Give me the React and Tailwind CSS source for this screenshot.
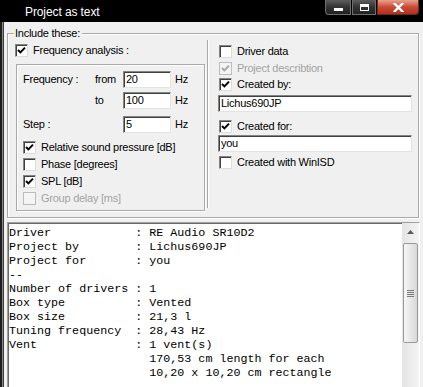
import React from "react";

const report = [
  "Driver            : RE Audio SR10D2",
  "Project by        : Lichus690JP",
  "Project for       : you",
  "--",
  "Number of drivers : 1",
  "Box type          : Vented",
  "Box size          : 21,3 l",
  "Tuning frequency  : 28,43 Hz",
  "Vent              : 1 vent(s)",
  "                    170,53 cm length for each",
  "                    10,20 x 10,20 cm rectangle",
].join("\n");

function Tick({ color }) {
  return (
    <svg width="9" height="9" viewBox="0 0 9 9">
      <polyline points="1,4 3.4,6.4 8,1.6" fill="none" stroke={color} strokeWidth="2" />
    </svg>
  );
}

function Check({ checked, disabled, label }) {
  return (
    <div className="flex h-[13px] items-center gap-[5px]">
      {disabled ? (
        <span className="flex h-[13px] w-[13px] shrink-0 items-center justify-center border border-[#bcbcbc] bg-[#f4f4f4]">
          {checked ? <Tick color="#a6a6a6" /> : null}
        </span>
      ) : (
        <span className="flex h-[13px] w-[13px] shrink-0 items-center justify-center border border-t-[#858585] border-l-[#858585] border-b-[#dcdcdc] border-r-[#dcdcdc] bg-white shadow-[inset_1px_1px_0_#404040]">
          {checked ? <Tick color="#000" /> : null}
        </span>
      )}
      <span className={disabled ? "text-[#a3a3a3]" : "text-black"}>{label}</span>
    </div>
  );
}

function Field({ value, className }) {
  return (
    <div
      className={`h-[17px] border border-t-[#858585] border-l-[#858585] border-b-[#e3e3e3] border-r-[#e3e3e3] bg-white pl-[2px] text-[11px] leading-[15px] shadow-[inset_1px_1px_0_#404040] ${className}`}
    >
      {value}
    </div>
  );
}

function Scrollbar() {
  return (
    <div className="flex w-[17px] flex-col bg-gradient-to-r from-[#e4e4e4] to-[#f4f4f4]">
      <div className="flex h-[17px] items-center justify-center">
        <svg width="7" height="4" viewBox="0 0 7 4">
          <polygon points="0,4 3.5,0 7,4" fill="#5a5a5a" />
        </svg>
      </div>
      <div className="mx-[1px] mt-[3px] flex h-[100px] flex-col items-center justify-center gap-[1px] rounded-[2px] border border-[#9a9a9a] bg-gradient-to-r from-[#f6f6f6] via-[#e8e8e8] to-[#d8d8d8]">
        <span className="h-[1px] w-[7px] bg-[#7a7a7a]" />
        <span className="h-[1px] w-[7px] bg-[#7a7a7a]" />
        <span className="h-[1px] w-[7px] bg-[#7a7a7a]" />
        <span className="h-[1px] w-[7px] bg-[#7a7a7a]" />
      </div>
    </div>
  );
}

export default function App() {
  return (
    <div className="flex h-[387px] w-[423px] flex-col overflow-hidden bg-black font-['Liberation_Sans',Arial,sans-serif] text-[11px] tracking-[-0.25px] text-black">
      {/* title bar */}
      <div className="flex h-[22px] shrink-0 items-start justify-between bg-black">
        <div className="pl-[25px] pt-[5px] text-[12px] leading-[14px] tracking-[-0.1px] text-white">Project as text</div>
        <div className="flex gap-[1px] pr-[4px]">
          <div className="flex h-[15px] w-[26px] items-end justify-center rounded-bl-[4px] border border-t-0 border-[#6e6e6e] bg-gradient-to-b from-[#5e5e5e] via-[#333] to-[#222] pb-[3px]">
            <span className="h-[3px] w-[9px] bg-white" />
          </div>
          <div className="flex h-[15px] w-[24px] items-center justify-center border border-t-0 border-[#6e6e6e] bg-gradient-to-b from-[#5e5e5e] via-[#333] to-[#222]">
            <span className="h-[7px] w-[9px] border border-t-[3px] border-white" />
          </div>
          <div className="flex h-[15px] w-[42px] items-center justify-center rounded-br-[4px] border border-t-0 border-[#6b2a22] bg-gradient-to-b from-[#e8a08e] via-[#c94a36] to-[#b3301c]">
            <svg width="11" height="9" viewBox="0 0 11 9">
              <path d="M1.5 0.5 L9.5 8.5 M9.5 0.5 L1.5 8.5" stroke="#fff" strokeWidth="2.4" strokeLinecap="square" />
            </svg>
          </div>
        </div>
      </div>

      {/* body */}
      <div className="flex min-h-0 flex-1">
        <div className="flex w-[4px] shrink-0">
          <span className="w-[2px] bg-[#1e1e1e]" />
          <span className="w-[1px] bg-[#8a8a8a]" />
          <span className="w-[1px] bg-[#3a3a3a]" />
        </div>

        <div className="flex min-w-0 flex-1 flex-col bg-[#f0f0f0]">
          {/* Include these group */}
          <div className="relative ml-[3px] mr-[1px] mt-[11px] flex h-[185px] shrink-0 items-start border border-[#a9a9a9] pl-[7px] pt-[10px] shadow-[inset_1px_1px_0_#fff,1px_1px_0_#fff]">
            <span className="absolute -top-[7px] left-[6px] bg-[#f0f0f0] pl-[1px] pr-[2px] leading-[13px]">Include these:</span>

            <div className="flex w-[190px] shrink-0 flex-col">
              <Check checked label="Frequency analysis :" />
              <div className="ml-[1px] mt-[7px] flex h-[147px] w-[189px] flex-col border border-[#a9a9a9] pl-[6px] pt-[6px] shadow-[inset_1px_1px_0_#fff,1px_1px_0_#fff]">
                <div className="flex h-[17px] items-center">
                  <span className="w-[72px]">Frequency :</span>
                  <span className="w-[28px]">from</span>
                  <Field value="20" className="w-[48px]" />
                  <span className="ml-[4px]">Hz</span>
                </div>
                <div className="mt-[4px] flex h-[17px] items-center">
                  <span className="w-[72px]" />
                  <span className="w-[28px]">to</span>
                  <Field value="100" className="w-[48px]" />
                  <span className="ml-[4px]">Hz</span>
                </div>
                <div className="mt-[7px] flex h-[17px] items-center">
                  <span className="w-[100px]">Step :</span>
                  <Field value="5" className="w-[48px]" />
                  <span className="ml-[4px]">Hz</span>
                </div>
                <div className="mt-[8px] flex flex-col gap-[4px]">
                  <Check checked label="Relative sound pressure [dB]" />
                  <Check label="Phase [degrees]" />
                  <Check checked label="SPL [dB]" />
                  <Check disabled label="Group delay [ms]" />
                </div>
              </div>
            </div>

            <div className="-mt-[4px] ml-[2px] flex h-[168px] flex-1 flex-col border-l border-[#a9a9a9] pl-[11px] pt-[5px] shadow-[inset_1px_0_0_#fff]">
              <Check label="Driver data" />
              <div className="mt-[4px]">
                <Check checked disabled label="Project describtion" />
              </div>
              <div className="mt-[3px]">
                <Check checked label="Created by:" />
              </div>
              <Field value="Lichus690JP" className="-ml-[1px] mt-[4px] w-[194px]" />
              <div className="mt-[8px]">
                <Check checked label="Created for:" />
              </div>
              <Field value="you" className="-ml-[1px] mt-[2px] w-[194px]" />
              <div className="mt-[4px]">
                <Check label="Created with WinISD" />
              </div>
            </div>
          </div>

          {/* report text */}
          <div className="ml-[3px] mt-[4px] flex min-h-0 w-[413px] flex-1 border-l border-r border-t border-[#a0a0a0] border-r-white bg-white shadow-[inset_1px_1px_0_#6a6a6a]">
            <pre className="min-w-0 flex-1 overflow-hidden pl-[1px] pt-[3px] font-['Liberation_Mono','Courier_New',monospace] text-[11.7px] leading-[14px] tracking-normal text-black">
              {report}
            </pre>
            <Scrollbar />
          </div>
        </div>

        <div className="w-[3px] shrink-0 bg-[#f0f0f0]" />
      </div>
    </div>
  );
}
